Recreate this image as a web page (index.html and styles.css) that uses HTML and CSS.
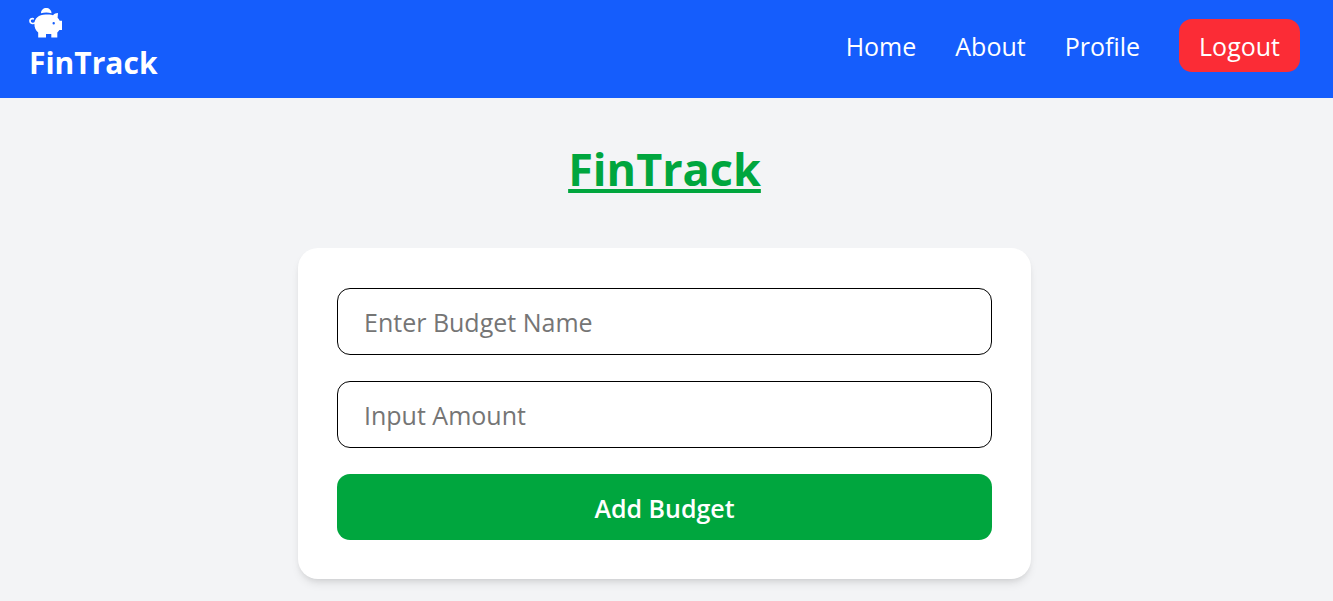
FILE: index.html
```html
<!DOCTYPE html>
<html lang="en">
<head>
<meta charset="utf-8">
<meta name="viewport" content="width=device-width, initial-scale=1">
<title>FinTrack</title>
<link rel="stylesheet" href="styles.css">
</head>
<body>
<header class="navbar">
  <div class="brand">
    <svg class="brand-icon" viewBox="0 0 34 30" aria-hidden="true">
      <path fill="#fff" d="M12 5.200C12 2 14.400 0 17.200 0s5.300 2 5.300 5.200a24 24 0 0 0-10.500 0z"/>
      <path fill="none" stroke="#fff" stroke-width="1.700" stroke-linecap="round" d="M4.300 10.800C2.500 10.300 1 11.200 1 13c0 2.200 2.600 3.300 5.500 1.800"/>
      <path fill="#fff" fill-rule="evenodd" d="M16.500 6.500c2.700 0 5.300.1 7.500.7 1.200-1.300 2.800-2 5-2.100l-.4 4.600c1 .9 1.700 1.900 2.100 3H33V22h-2.600c-.6 1-1.200 1.800-2.100 2.500v5h-6V26H17v3.500H9.200v-5C6.500 22.600 5.400 19.500 5.400 16c0-5.500 4.300-9.500 11.100-9.500zM24.700 14.100a1.200 1.200 0 1 0 0 2.400 1.200 1.200 0 0 0 0-2.400z"/>
    </svg>
    <span class="brand-name">FinTrack</span>
  </div>
  <nav class="menu">
    <a class="menu-link" href="#">Home</a>
    <a class="menu-link" href="#">About</a>
    <a class="menu-link" href="#">Profile</a>
    <button class="logout" type="button">Logout</button>
  </nav>
</header>
<main class="page">
  <h1 class="title">FinTrack</h1>
  <form class="card">
    <input class="field" type="text" placeholder="Enter Budget Name" aria-label="Enter Budget Name">
    <input class="field" type="text" placeholder="Input Amount" aria-label="Input Amount">
    <button class="submit" type="button">Add Budget</button>
  </form>
</main>
</body>
</html>
```
FILE: styles.css
```css
* {
  box-sizing: border-box;
}

body {
  margin: 0;
  min-height: 100vh;
  background: #f3f4f6;
  font-family: "Segoe UI", "Open Sans", "Noto Sans", sans-serif;
  font-size: 25px;
  line-height: 36px;
}

.navbar {
  display: flex;
  justify-content: space-between;
  align-items: flex-start;
  padding: 8px 33px 11px 29px;
  background: #155dfc;
  color: #fff;
}

.brand {
  display: flex;
  flex-direction: column;
}

.brand-icon {
  width: 34px;
  height: 30px;
}

.brand-name {
  font-size: 30px;
  font-weight: 700;
  line-height: 49px;
}

.menu {
  display: flex;
  align-items: center;
  gap: 39px;
  padding-top: 11px;
}

.menu-link {
  color: inherit;
  text-decoration: none;
}

.logout {
  padding: 9px 20px 7px;
  border: 0;
  border-radius: 13px;
  background: #fb2c36;
  color: #fff;
  font: inherit;
  line-height: 37px;
}

.page {
  padding: 39px 36px 22px 32px;
}

.title {
  margin: 0 0 47px;
  color: #00a63e;
  font-size: 45px;
  font-weight: 700;
  line-height: 64px;
  text-align: center;
  text-decoration: underline;
  text-decoration-thickness: 4px;
  text-underline-offset: 3px;
  text-decoration-skip-ink: none;
}

.card {
  display: flex;
  flex-direction: column;
  gap: 26px;
  max-width: 733px;
  margin: 0 auto;
  padding: 40px 39px 39px;
  border-radius: 20px;
  background: #fff;
  box-shadow: 0 6px 10px -2px rgba(0, 0, 0, 0.1), 0 3px 6px -3px rgba(0, 0, 0, 0.1);
}

.field {
  width: 100%;
  padding: 16px 26px 14px;
  border: 1px solid #000;
  border-radius: 13px;
  background: #fff;
  font: inherit;
  line-height: 35px;
}

.field::placeholder {
  color: #757575;
}

.submit {
  padding: 16px 26px 13px;
  border: 0;
  border-radius: 13px;
  background: #00a63e;
  color: #fff;
  font: inherit;
  font-weight: 600;
  line-height: 37px;
}
```
